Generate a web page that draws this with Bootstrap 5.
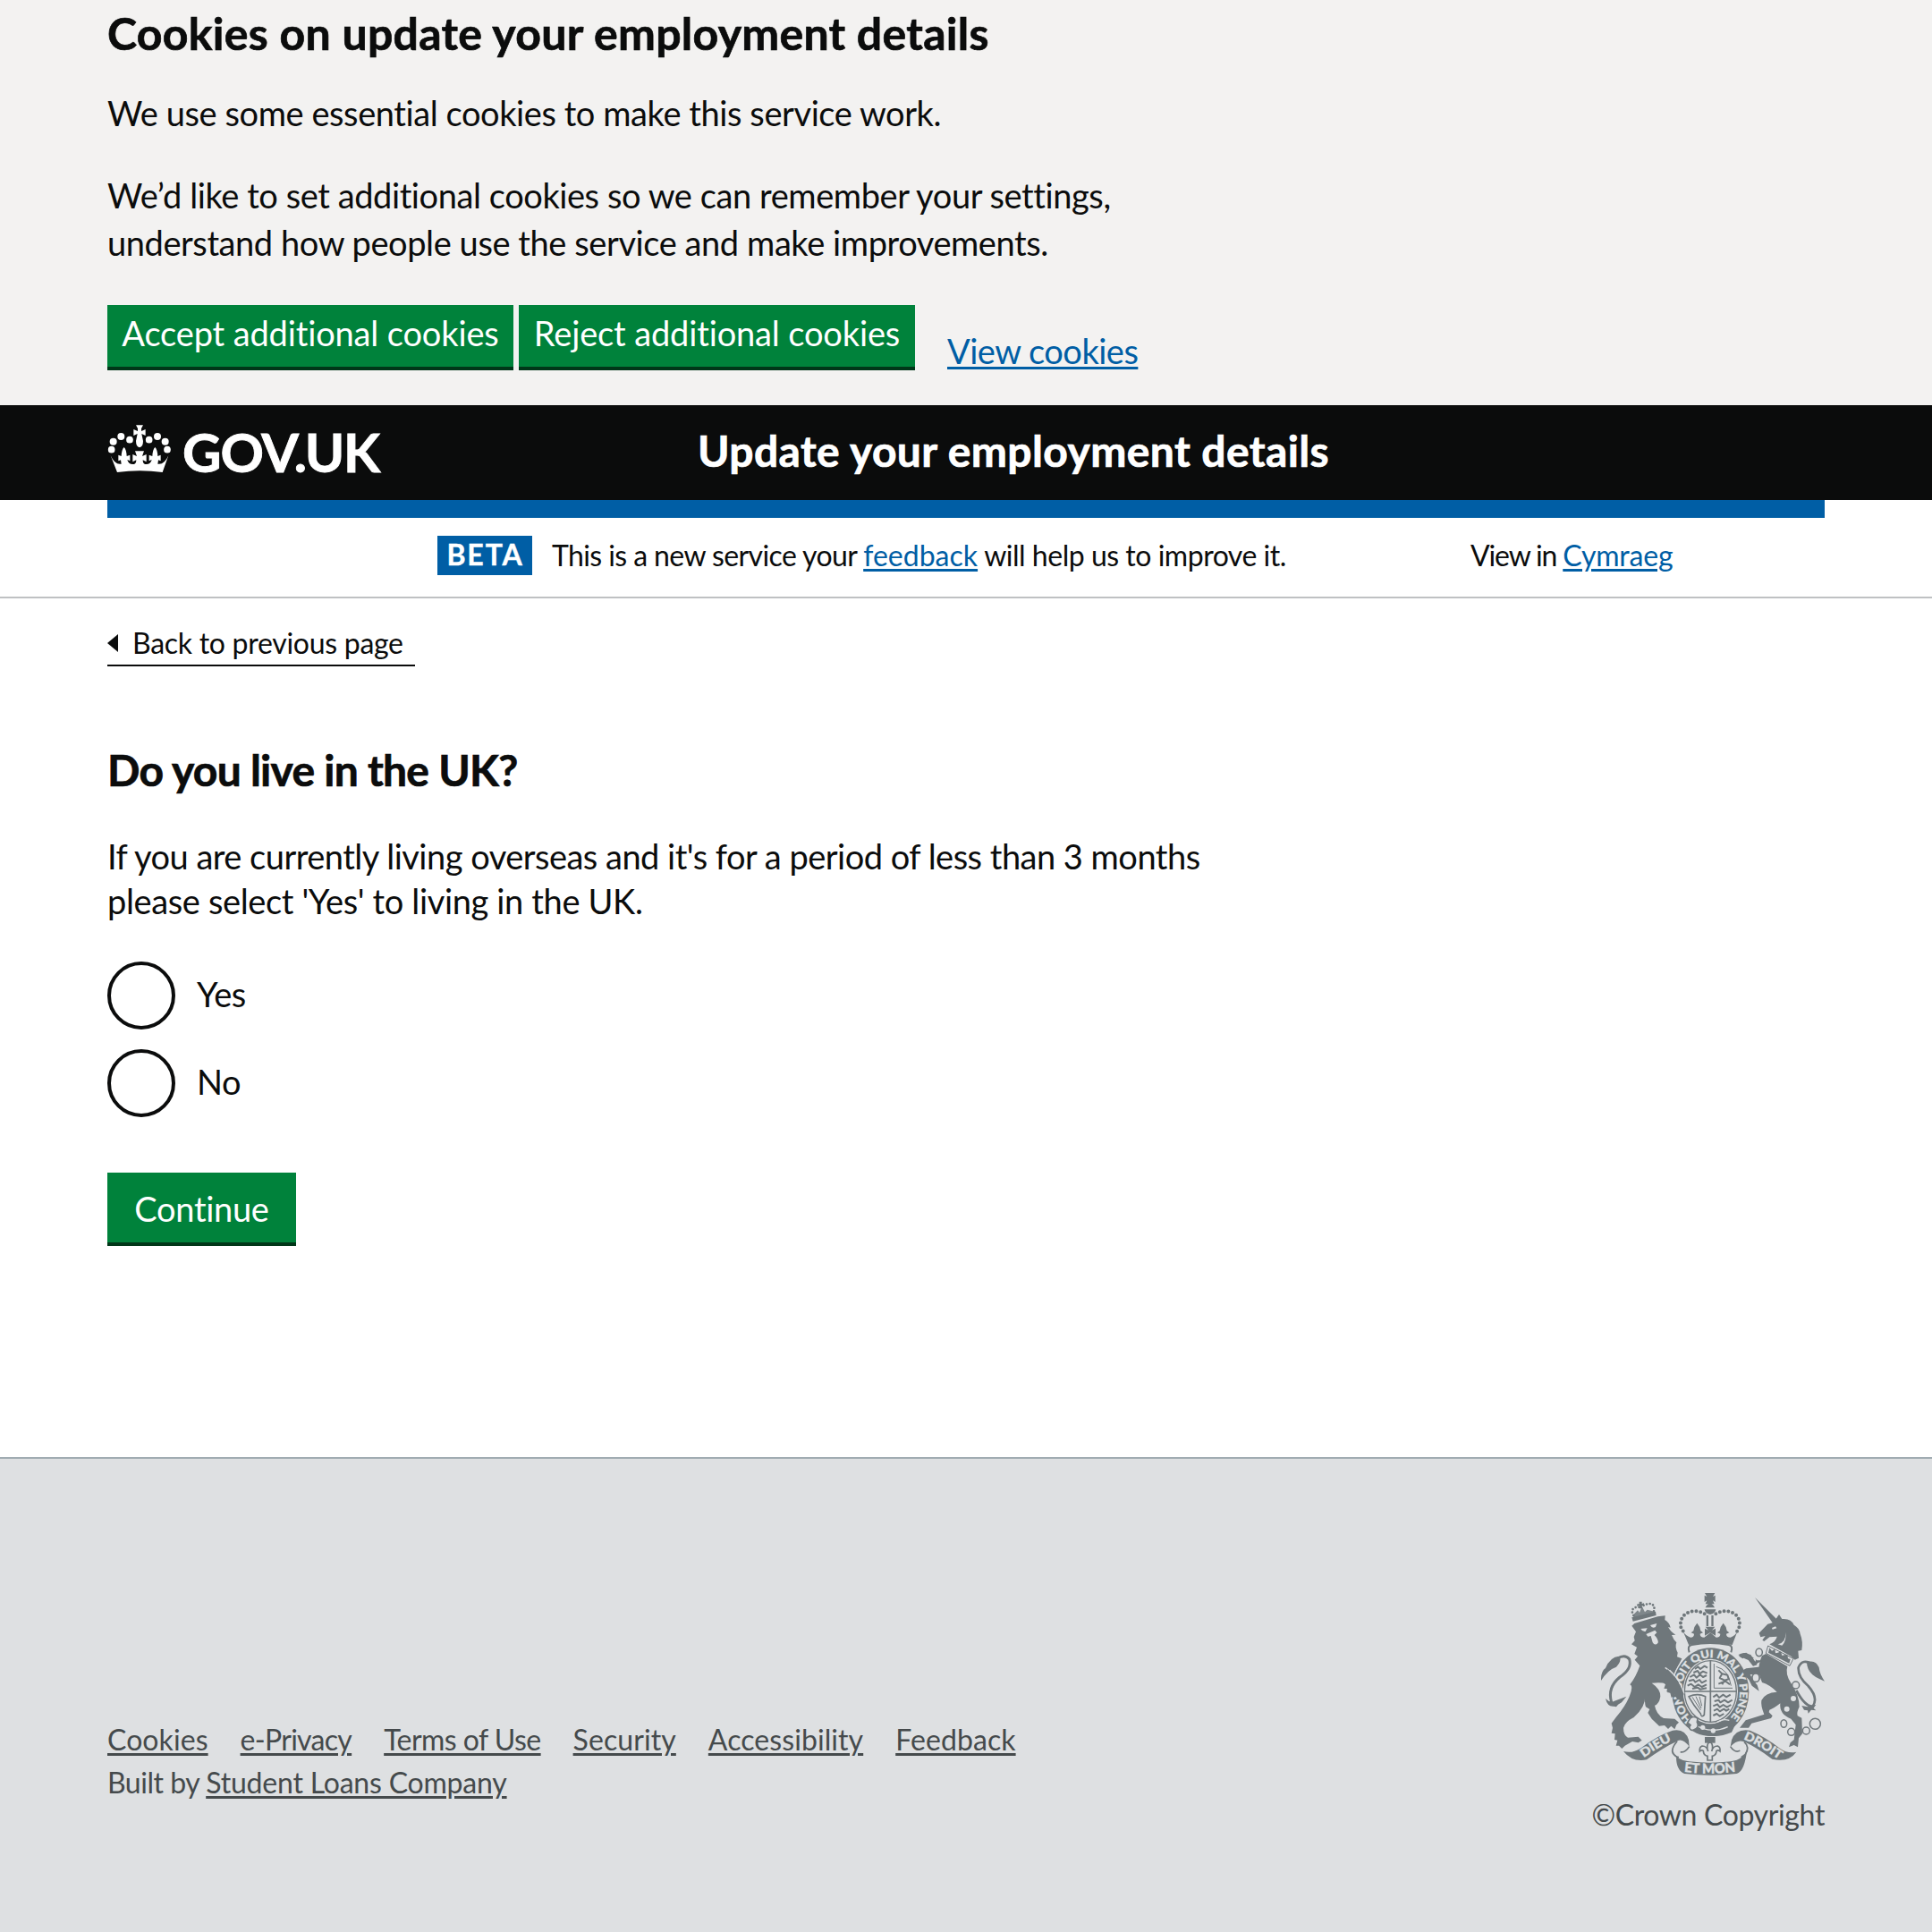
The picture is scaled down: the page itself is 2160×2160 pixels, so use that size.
<!DOCTYPE html>
<html lang="en">
<head>
<meta charset="utf-8">
<meta name="viewport" content="width=device-width, initial-scale=1">
<title>Do you live in the UK? - Update your employment details</title>
<link href="https://cdn.jsdelivr.net/npm/bootstrap@5.3.0/dist/css/bootstrap.min.css" rel="stylesheet">
<style>
body{font-family:Lato,"Open Sans",sans-serif;font-size:38px;line-height:50px;color:#0b0c0c;background:#fff;font-variant-ligatures:none}
.page-wrap{width:1920px;margin-left:auto;margin-right:auto}
.ui-link{color:#005ea5;text-decoration:underline;text-decoration-thickness:3px;text-underline-offset:3px}
.cookie-banner{background:#f3f2f1;height:453px;padding-top:12px}
.cookie-banner h2{font-size:50px;line-height:50px;font-weight:700;letter-spacing:.28px;margin-bottom:38px;-webkit-text-stroke:.7px currentColor}
.cookie-banner p{line-height:53px;letter-spacing:-.42px;margin-bottom:39px}
.cookie-banner p.last-line{margin-bottom:43px}
.gov-btn{background:#00823b;border:0;border-bottom:4px solid #003618;border-radius:0;color:#fff;font-size:38px;line-height:53px;height:73px;padding:5px 0 0;letter-spacing:-.14px}
.gov-btn:hover{background:#00692f;color:#fff;border-color:#003618}
.btn-accept{width:454px}
.btn-reject{width:443px;margin-left:6px}
.view-link{margin:25px 0 0 36px;line-height:53px;letter-spacing:-.5px}
.gov-btn.btn-continue{width:211px;height:82px;padding-top:14px;margin-top:62px;letter-spacing:-.3px}
.gov-header{background:#0b0c0c;color:#fff;height:106px}
.gov-header .crest{margin-top:20px}
.gov-header .brand{font-size:60px;line-height:60px;font-weight:700;letter-spacing:-1.15px;margin:22px 0 0 12px;width:576px;-webkit-text-stroke:.9px currentColor}
.gov-header .service{font-size:48px;line-height:60px;font-weight:700;letter-spacing:.4px;margin-top:21px;-webkit-text-stroke:.7px currentColor}
.blue-bar{height:20px;background:#005ea5}
.phase-bar{height:90px;border-bottom:2px solid #bfc1c3;font-size:32px;line-height:44px;letter-spacing:-.6px}
.phase-bar .page-wrap{padding-left:369px;padding-top:20px}
.phase-tag{background:#005ea5;color:#fff;font-weight:700;width:106px;height:44px;line-height:42px;letter-spacing:1.9px;padding-left:1px;-webkit-text-stroke:.4px currentColor}
.phase-text{margin:0 0 0 22px;width:1027px}
.sp-feedback{letter-spacing:.02px}
.sp-tail{letter-spacing:-.48px}
.sp-view{letter-spacing:-1.15px}
.sp-cym{letter-spacing:-.2px}
.back-link{margin-top:29px;width:344px;font-size:32px;line-height:42px;height:47px;border-bottom:2px solid #0b0c0c;color:#0b0c0c;letter-spacing:-.28px}
.back-link svg{margin:11px 16px 0 0}
main h1{font-size:48px;line-height:60px;font-weight:700;letter-spacing:-.74px;margin:86px 0 41px;-webkit-text-stroke:.7px currentColor}
main p{letter-spacing:-.51px;margin-bottom:43px}
.hint-second{letter-spacing:-.36px}
.radio-row{height:76px}
.radio-row+.radio-row{margin-top:22px}
.radio-row .form-check-input{width:76px;height:76px;margin:0;border:4px solid #0b0c0c;background:#fff}
.radio-row label{line-height:73px;margin-left:24px;letter-spacing:-.4px}
.gov-footer{margin-top:236px;border-top:2px solid #a1acb2;background:#dee0e2;color:#454a4c;height:531px;padding-top:149px;font-size:32px;line-height:48px;letter-spacing:-.2px}
.gov-footer a{color:#454a4c;text-decoration:underline;text-decoration-thickness:3px;text-underline-offset:3px}
.foot-left{margin-top:141px}
.foot-links{gap:36px}
.foot-links .tight{letter-spacing:-.7px}
.foot-links .mid{letter-spacing:-.55px}
.foot-links .loose{letter-spacing:.08px}
.copy-text{line-height:40px;margin-top:23px;letter-spacing:-.36px}
.arms{display:block}
.arms text{font-family:Lato,sans-serif;font-weight:900}
</style>
<script src="https://cdn.jsdelivr.net/npm/bootstrap@5.3.0/dist/js/bootstrap.bundle.min.js"></script>
</head>
<body>
<section class="cookie-banner">
  <div class="page-wrap">
    <h2>Cookies on update your employment details</h2>
    <p>We use some essential cookies to make this service work.</p>
    <p class="last-line">We’d like to set additional cookies so we can remember your settings,<br>understand how people use the service and make improvements.</p>
    <div class="d-flex align-items-start">
      <button class="btn gov-btn btn-accept d-flex justify-content-center align-items-start" type="button">Accept additional cookies</button>
      <button class="btn gov-btn btn-reject d-flex justify-content-center align-items-start" type="button">Reject additional cookies</button>
      <a class="ui-link view-link" href="#">View cookies</a>
    </div>
  </div>
</section>
<header>
  <div class="gov-header">
    <div class="page-wrap d-flex align-items-start">
      <svg class="crest flex-shrink-0" width="72" height="64" viewBox="60 98 216 192" fill="#fff">
        <circle cx="74" cy="187" r="11.5"/><circle cx="80" cy="160" r="12"/><circle cx="106" cy="143" r="12"/><circle cx="135" cy="154" r="11.5"/>
        <circle cx="200" cy="154" r="11.5"/><circle cx="228" cy="143" r="12"/><circle cx="254" cy="160" r="12"/><circle cx="261" cy="187" r="11.5"/>
        <path d="M156 105h24l-6 11v9l14-6v21l-13-6 5 24q0 20-12 22q-12-2-12-22l5-24-13 6v-21l14 6v-9z"/>
        <path d="M71 207q14 32 36 28l-2-13-8 3v-20l10 4q1-22 9-30 8 8 9 30l11-4v20l-9-4q4 17 22 15 8-2 8-14l-12 6v-25l14 6-6-17h30l-6 17 14-6v25l-12-6q0 12 8 14 18 2 22-15l-9 4v-20l11 4q1-22 9-30 8 8 9 30l10-4v20l-8-3-2 13q22 4 36-28l-20 56q-76-10-152 0z"/>
      </svg>
      <div class="brand">GOV.UK</div>
      <div class="service">Update your employment details</div>
    </div>
  </div>
  <div class="page-wrap blue-bar"></div>
  <div class="phase-bar">
    <div class="page-wrap d-flex align-items-start">
      <strong class="phase-tag text-center">BETA</strong>
      <div class="phase-text">This is a new service your <a class="ui-link sp-feedback" href="#">feedback</a><span class="sp-tail"> will help us to improve it.</span></div>
      <div><span class="sp-view">View in </span><a class="ui-link sp-cym" href="#">Cymraeg</a></div>
    </div>
  </div>
</header>
<main class="page-wrap">
  <a class="back-link d-flex align-items-start text-decoration-none" href="#"><svg width="12" height="20" viewBox="0 0 12 20"><path d="M12 0v20L0 10z" fill="#0b0c0c"/></svg>Back to previous page</a>
  <h1>Do you live in the UK?</h1>
  <p>If you are currently living overseas and it's for a period of less than 3 months<br><span class="hint-second">please select 'Yes' to living in the UK.</span></p>
  <div class="radio-row d-flex align-items-start"><input class="form-check-input" type="radio" name="uk" id="r-yes"><label for="r-yes">Yes</label></div>
  <div class="radio-row d-flex align-items-start"><input class="form-check-input" type="radio" name="uk" id="r-no"><label for="r-no">No</label></div>
  <button class="btn gov-btn btn-continue d-flex justify-content-center align-items-start" type="button">Continue</button>
</main>
<footer class="gov-footer">
  <div class="page-wrap d-flex justify-content-between align-items-start">
    <div class="foot-left">
      <div class="d-flex foot-links"><a class="loose" href="#">Cookies</a><a class="tight" href="#">e-Privacy</a><a class="mid" href="#">Terms of Use</a><a class="loose" href="#">Security</a><a class="loose" href="#">Accessibility</a><a class="loose" href="#">Feedback</a></div>
      <div><span class="sp-tail">Built by </span><a href="#">Student Loans Company</a></div>
    </div>
    <div class="d-flex flex-column align-items-end">
      <svg class="arms" width="250" height="206" viewBox="90 60 750 618" fill="#6f777b">
        <!-- royal crown -->
        <path d="M438 63h34l-7 12 8-4v22l-8-5 5 12h-30l5-12-8 5v-22l8 4zM440 112q4-12 15-14 12 2 16 14zM437 118h38q-2 14-19 17-17-3-19-17z"/>
        <path d="M443 138h7v36h-7zM460 138h7v36h-7zM440 176h32l-10 12 12-6v24l-18-10-18 10v-24l12 6z"/>
        <g fill="none" stroke="#6f777b" stroke-width="12" stroke-linecap="round" stroke-dasharray="0 14.6"><path d="M437 133Q405 115 375 132Q352 150 358 178L372 203"/><path d="M475 133Q507 115 537 132Q560 150 553 178L540 203"/></g>
        <path d="M364 190Q374 208 390 212Q402 212 402 200L392 196L400 190Q402 174 412 164Q422 174 424 190L432 196L422 200Q422 212 436 212L457 196L476 212Q490 212 490 200L480 196L488 190Q490 174 500 164Q510 174 512 190L520 196L510 200Q510 212 524 212Q540 208 548 190Q540 212 530 237Q457 225 384 237Q374 212 364 190Z"/>
        <path d="M386 262q-8-22 8-25 62-12 124 0 16 3 8 25" fill="none" stroke="#6f777b" stroke-width="6"/>
        <!-- lion -->
        <g transform="translate(75 45)">
          <path d="M118 128L127 120L205 97L230 94L229 108Q245 118 248 134L240 132Q250 150 265 158L252 159Q258 175 268 184Q262 200 272 218L270 232L286 238Q274 262 262 285Q280 305 292 345L290 372L272 375L262 360L252 368L250 352L238 352L240 340L226 338L232 322Q215 316 185 320Q215 340 214 365Q210 390 195 395Q200 425 225 438L262 440L276 452L268 460L262 475L250 464L240 474L228 462L210 464L185 440L172 420L178 408L165 400Q160 385 163 360Q165 400 125 435Q95 450 90 470Q90 495 105 503L140 500L152 512L140 520L120 516L95 530L85 540L75 530L65 530L70 512L60 510L62 490L50 488L54 470L50 455L65 435Q95 400 110 365Q125 330 112 325Q132 300 145 262L128 242L138 230L127 222L135 200L117 190L128 178L125 165L132 148Z"/>
          <path d="M148 138l22-2 -6 11q-10 2-16-9zM180 126l22-6-4 12q-12 6-18-6zM166 156l30-13 6 8-8 8q14 14 12 26-10 12-18-1l-6-22-10 2z" fill="#dee0e2"/>
          <path d="M118 100l80-20 2 13-78 20z"/>
          <path d="M122 92l16-16 6 8 8-22 10 20 8-8 24 6 4 6-72 18z" opacity=".85"/>
          <g fill="none" stroke="#6f777b" stroke-width="8" stroke-linecap="round" stroke-dasharray="0 11"><path d="M124 93Q112 72 132 66Q142 64 150 68"/><path d="M192 79Q198 56 178 54Q166 54 154 62"/></g>
          <path d="M143 47h9v7l7-2v9l-7-1 2 10h-10l-1-9-7 2v-8l7 0z"/>
          <path d="M70 238Q95 222 110 240Q120 272 78 300Q35 335 50 385" fill="none" stroke="#6f777b" stroke-width="9"/>
          <path d="M15 312Q14 280 30 270Q45 232 76 230Q86 246 66 266Q38 275 15 312ZM30 372Q45 388 60 380L100 365L84 385L72 392L66 400L58 398Q36 400 30 372Z"/>
          <path d="M230 268Q262 288 278 325" fill="none" stroke="#dee0e2" stroke-width="4"/>
        </g>
        <!-- unicorn -->
        <g transform="translate(465 45)">
          <path d="M141 33L220 112L200 118ZM184 122L203 117L222 90L232 105Q262 102 272 125Q290 135 293 155Q303 180 298 210L286 212L288 236L275 242L262 230L190 190Q212 180 215 164L190 166L172 180L166 176L176 162L160 166L155 152Z"/>
          <path d="M198 135l12-5 4 6-14 4zM218 190q28-6 26-40 4 28-12 44z" fill="#dee0e2"/>
          <path d="M185 195L270 238L258 262L178 220Z" fill="#dee0e2" stroke="#6f777b" stroke-width="3"/>
          <path d="M186 218l4-16 8 10 10-6 2 14 8-2 10-4 4 14 8-2 10-2 2 14 8 2-4 14z"/>
          <path d="M165 228L178 222L250 264Q242 290 262 320Q290 360 290 400Q280 420 284 430L298 437L300 490L288 505L285 535L272 528L255 535L260 520L272 510L278 460L262 440Q222 425 226 388Q205 405 190 410L188 418L200 430L195 438L130 455L120 470L90 470L110 445L172 425Q160 395 163 378Q175 352 215 350Q190 325 165 318L155 290Q150 260 165 228Z"/>
          <path d="M168 244L135 262L122 240L108 232L100 238L88 230L92 222L112 218L148 244Z"/>
          <g fill="none" stroke="#6f777b" stroke-width="4.500"><ellipse cx="155" cy="217" rx="11" ry="13"/><ellipse cx="144" cy="302" rx="12" ry="14" fill="#dee0e2"/><circle cx="278" cy="327" r="12" fill="#dee0e2"/><ellipse cx="238" cy="456" rx="10" ry="13"/><circle cx="263" cy="484" r="12"/><circle cx="313" cy="480" r="12"/><circle cx="343" cy="457" r="18"/></g>
          <path d="M336 258Q300 235 287 268Q285 300 320 330Q355 370 335 398Q310 400 280 345" fill="none" stroke="#6f777b" stroke-width="8"/>
          <path d="M315 250Q345 240 356 268Q358 290 375 314Q345 302 334 292Q315 275 315 250ZM298 396l20 4 28-8-8 12 8 8-16-2-10 12-2-10-12-2z"/>
          <g fill="#dee0e2"><circle cx="270" cy="372" r="9"/><circle cx="248" cy="407" r="9"/><circle cx="137" cy="243" r="7"/></g>
        </g>
        <!-- garter and shield -->
        <ellipse cx="457" cy="395" rx="133" ry="152" fill="#dee0e2"/>
        <ellipse cx="457" cy="395" rx="129" ry="148"/>
        <ellipse cx="457" cy="393" rx="92" ry="109" fill="#dee0e2"/>
        <ellipse cx="457" cy="393" rx="87" ry="103" fill="none" stroke="#6f777b" stroke-width="4"/>
        <path d="M457 290v206M370 393h174" stroke="#6f777b" stroke-width="5"/>
        <path id="garter" d="M397 487A98 116 0 1 1 519 486" fill="none"/>
        <text font-size="36" fill="#dee0e2" stroke="#dee0e2" stroke-width="1"><textPath href="#garter" textLength="530" lengthAdjust="spacingAndGlyphs">HONI SOIT QUI MAL Y PENSE</textPath></text>
        <g fill="none" stroke="#6f777b" stroke-width="6" stroke-linejoin="round">
          <path d="M405 318l10-8 8 8 14-10 10 6M400 330l14-6 6 10 12-8 14 6M388 345l14-8 8 10 12-10 10 8 12-6M384 358l16-4 6 8 14-8 8 10 16-8M380 374l12-6 12 10 12-8 12 8 16-8M396 384l18-4 8 6 22-4"/>
          <path d="M469 300v82h62M476 310q42 10 50 64" stroke-width="3"/>
          <path d="M484 322l12 12-8 14 16 8-8 14M496 334l18 4 4 14-14 4 18 14M484 368l14-6"/>
          <path d="M466 412l12-8 8 10 14-10 10 8 14-8M470 426l14-4 6 8 14-8 12 8 14-8M466 442l14-6 8 10 12-8 12 8 14-8M468 458l12-6 8 8 14-8 8 6 10-6M466 474l12-6 10 8 14-8"/>
          <path d="M384 410q30-12 56 0l-4 62q-10 10-12-4-24-28-40-58z" stroke-width="5"/>
          <path d="M396 412l28 44M408 410l18 40M420 410l8 32" stroke-width="3"/>
        </g>
        <path d="M388 490Q455 545 540 505L528 530Q460 560 392 520Z"/>
        <path d="M392 498Q455 540 515 512M480 496q16-12 40-6" fill="none" stroke="#dee0e2" stroke-width="4"/>
        <path d="M390 482q14-8 24 2l-2 12q10 18-12 26-12 4-14-10l4-6-10-8z" fill="#dee0e2" stroke="#6f777b" stroke-width="5"/>
        <g fill="#dee0e2"><circle cx="431" cy="514" r="8"/><circle cx="466" cy="525" r="8"/></g>
        <!-- paws resting on the garter -->
        <path d="M312 318Q350 350 368 400L362 424L345 420L338 404L326 414L322 398L310 394L314 375L300 365Z"/>
        <path d="M320 322Q354 352 369 400" fill="none" stroke="#dee0e2" stroke-width="4"/>
        <path d="M550 270l20-6 22 6 14 22 8 12-14 4-16-20-14-6zM630 310L577 316L562 324L572 340L586 354L596 374L620 392L614 372L598 352L590 336L630 340Z"/>
        <ellipse cx="609" cy="347" rx="12" ry="14" fill="#dee0e2" stroke="#6f777b" stroke-width="4.500"/>
        <!-- motto ribbon -->
        <path d="M438 546h35v20h-35z"/>
        <path d="M455 560q14 14 6 34 4-18 20-18 10 4 8 18-6-6-12-2 0 16-14 18v14h-16v-14q-14-2-14-18-6-4-12 2-2-14 8-18 16 0 20 18-8-20 6-34z" fill="#dee0e2" stroke="#6f777b" stroke-width="5"/>
        <path d="M165 594Q195 602 222 584Q280 540 330 524Q372 516 384 556L386 578Q362 548 345 560Q300 580 243 622Q195 632 165 594Z"/>
        <path d="M745 596Q715 602 690 584Q640 545 590 524Q542 516 528 556L524 578Q548 552 570 562Q610 580 664 620Q720 632 745 596Z"/>
        <path d="M386 578Q372 600 356 596M345 560Q320 590 334 604Q345 616 350 612M524 578Q538 600 556 592M570 562Q590 580 574 604L560 614" fill="none" stroke="#6f777b" stroke-width="5"/>
        <path d="M330 590Q345 625 385 628Q455 636 525 628Q570 622 580 586Q572 662 545 669Q455 680 370 669Q342 658 342 612Z"/>
        <g fill="#dee0e2" stroke="#dee0e2" stroke-width="1">
          <path id="m1" d="M233 616Q290 574 345 550" fill="none" stroke="none"/><text font-size="41"><textPath href="#m1" textLength="110" lengthAdjust="spacingAndGlyphs">DIEU</textPath></text>
          <path id="m2" d="M567 553Q615 571 690 624" fill="none" stroke="none"/><text font-size="41"><textPath href="#m2" textLength="138" lengthAdjust="spacingAndGlyphs">DROIT</textPath></text>
          <path id="m3" d="M368 663Q455 674 550 661" fill="none" stroke="none"/><text font-size="46"><textPath href="#m3" textLength="174" lengthAdjust="spacingAndGlyphs">ET MON</textPath></text>
        </g>
      </svg>
      <div class="copy-text">©Crown Copyright</div>
    </div>
  </div>
</footer>
</body>
</html>
